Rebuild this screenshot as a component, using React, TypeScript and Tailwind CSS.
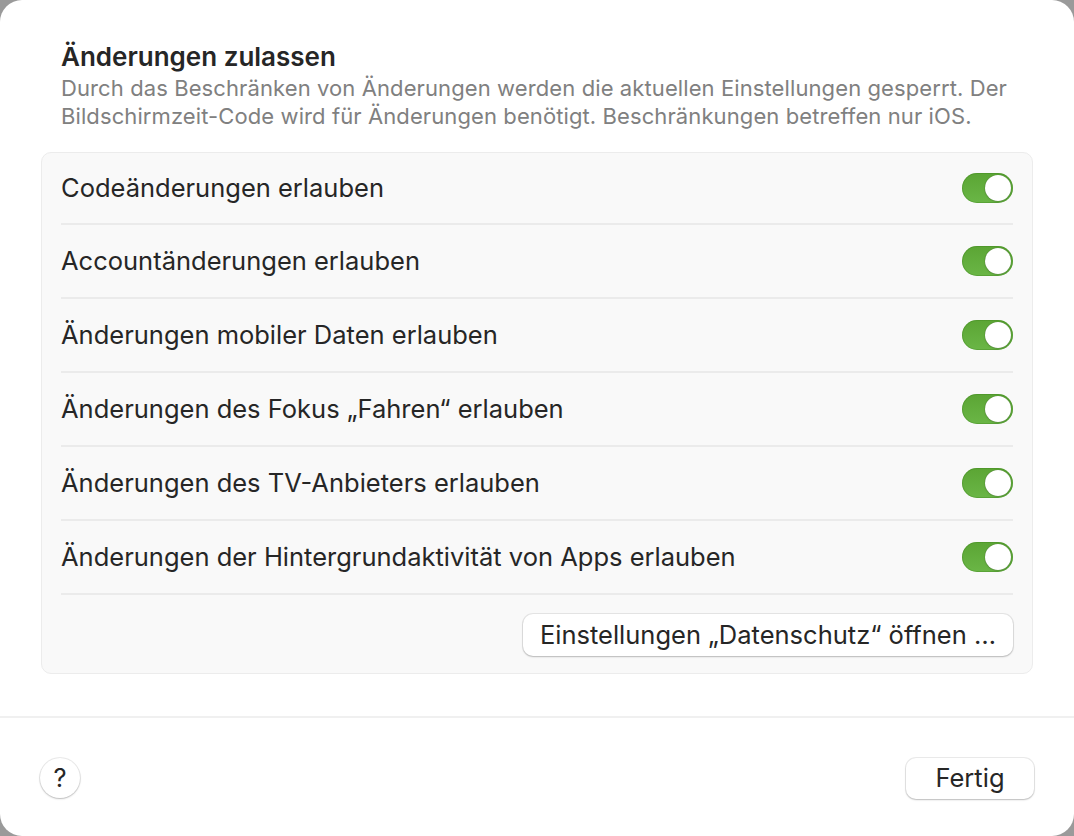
import React from 'react';

const rows = [
  'Codeänderungen erlauben',
  'Accountänderungen erlauben',
  'Änderungen mobiler Daten erlauben',
  'Änderungen des Fokus „Fahren“ erlauben',
  'Änderungen des TV-Anbieters erlauben',
  'Änderungen der Hintergrundaktivität von Apps erlauben',
];

const Toggle = () => (
  <div className="w-[51px] h-[30px] rounded-full bg-gradient-to-b from-[#5ba534] to-[#6ab646] flex items-center justify-end pr-[2px] shadow-[inset_0_0_0_1px_rgba(60,130,30,0.35)]">
    <div className="w-[26px] h-[26px] rounded-full bg-white shadow-[0_0_1px_rgba(0,0,0,0.4),0_1px_2px_rgba(0,0,0,0.15)]" />
  </div>
);

export default function App() {
  return (
    <div className="w-[1074px] h-[836px] bg-[#9a9a9a]" style={{ fontFamily: 'Inter, "Noto Sans", sans-serif' }}>
      <div className="w-full h-full bg-white rounded-[22px] flex flex-col">
        <div className="px-[41px] pt-[40px] flex-1">
          <div className="px-[20px]">
            <h1 className="text-[26px] font-semibold text-[#262626] leading-[34px]">Änderungen zulassen</h1>
            <p className="text-[22px] leading-[28px] text-[#808080] tracking-[0.1px]">
              Durch das Beschränken von Änderungen werden die aktuellen Einstellungen gesperrt. Der
              <br />
              Bildschirmzeit-Code wird für Änderungen benötigt. Beschränkungen betreffen nur iOS.
            </p>
          </div>
          <div className="mt-[22px] rounded-[10px] bg-[#f9f9f9] border border-[#ececec] px-[19px]">
            {rows.map((r, i) => (
              <div
                key={r}
                className={`flex items-center justify-between border-b-2 border-[#ebebeb] ${i === 0 ? 'h-[72px]' : 'h-[74px]'}`}
              >
                <span className="text-[25.5px] text-[#262626]">{r}</span>
                <Toggle />
              </div>
            ))}
            <div className="flex justify-end pt-[19px] pb-[17px]">
              <button className="h-[42px] px-[17px] rounded-[10px] bg-white text-[25.5px] text-[#262626] shadow-[0_0_0_1px_rgba(0,0,0,0.08),0_1px_2px_rgba(0,0,0,0.2)]">
                Einstellungen „Datenschutz“ öffnen …
              </button>
            </div>
          </div>
        </div>
        <div className="h-[120px] border-t-2 border-[#f0f0f0] flex items-center justify-between px-[40px] pt-[2px]">
          <button className="w-[40px] h-[40px] rounded-full bg-white text-[25.5px] text-[#262626] flex items-center justify-center shadow-[0_0_0_1px_rgba(0,0,0,0.08),0_1px_2px_rgba(0,0,0,0.2)]">?</button>
          <button className="w-[128px] h-[41px] rounded-[10px] bg-white text-[25.5px] text-[#262626] shadow-[0_0_0_1px_rgba(0,0,0,0.08),0_1px_2px_rgba(0,0,0,0.2)]">Fertig</button>
        </div>
      </div>
    </div>
  );
}
